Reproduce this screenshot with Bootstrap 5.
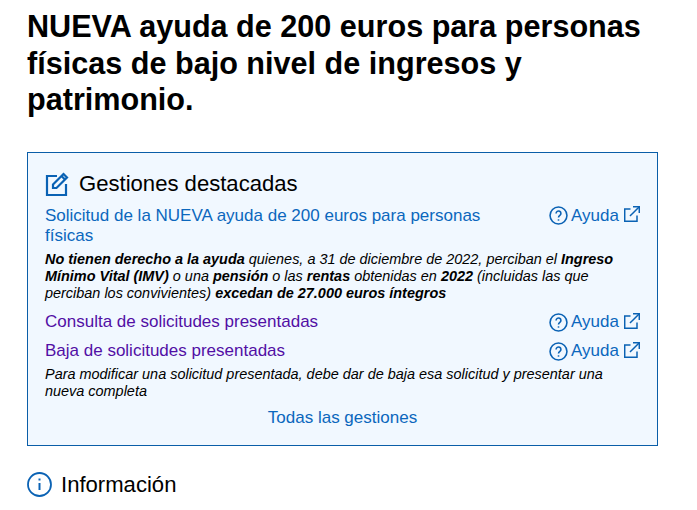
<!DOCTYPE html>
<html lang="es">
<head>
<meta charset="utf-8">
<title>Ayuda 200 euros</title>
<link href="https://cdn.jsdelivr.net/npm/bootstrap@5.3.0/dist/css/bootstrap.min.css" rel="stylesheet">
<style>
body { font-family: "Liberation Sans", Arial, sans-serif; color: #000; overflow: hidden; }
a { text-decoration: none; color: #0b67bd; }
.page-wrap { padding: 8px 39px 0 27px; }
.main-title { font-family: inherit; font-size: 30.6px; font-weight: 700; line-height: 36.7px; margin: 0 0 34px; color: #000; }
.feature-box { border: 1px solid #0a5ea8; background: #f1f8ff; padding: 17px; }
.box-head { font-size: 22.1px; line-height: 27px; margin: 0 0 8.5px; font-weight: 400; }
.head-ico { width: 24px; height: 24px; margin-right: 10px; flex: none; color: #0a62b4; }
.tool-row { font-size: 17px; line-height: 20.4px; }
.tool-gap-a { margin-bottom: 5px; }
.tool-gap-b { margin-bottom: 8.6px; }
.tool-gap-c { margin-bottom: 4px; }
.visited-link { color: #520fa5; }
.help-link { width: 90px; flex: none; white-space: nowrap; }
.help-ico { width: 19px; height: 19px; color: #0a62b4; flex: none; margin-left: -1px; margin-right: 3px; }
.ext-ico { width: 16px; height: 16px; color: #0a62b4; flex: none; margin-left: 5px; margin-top: -3px; }
.note { font-size: 14.45px; line-height: 17px; font-style: italic; margin: 0 0 10px; }
.note-end { margin-bottom: 8px; }
.all-link { font-size: 17px; line-height: 20px; }
.info-head { font-size: 22.1px; line-height: 27px; font-weight: 400; margin: 25px 0 0; }
.info-ico { width: 25px; height: 25px; margin-right: 9px; color: #0a62b4; flex: none; }
.tool-main { max-width: 460px; }
</style>
</head>
<body>
<div class="page-wrap">
  <h1 class="main-title">NUEVA ayuda de 200 euros para personas físicas de bajo nivel de ingresos y patrimonio.</h1>
  <section class="feature-box">
    <h2 class="box-head d-flex align-items-center">
      <svg class="head-ico" viewBox="0 0 24 24" fill="none" stroke="currentColor" stroke-width="2.200"><path d="M12 4H2v19h19V12"/><path d="M8 12.500 18.500 2l3.500 3.500L11.500 16H8z"/><path d="m16.500 4 3.500 3.500"/></svg>
      Gestiones destacadas
    </h2>
    <div class="tool-row tool-gap-a d-flex justify-content-between">
      <a href="#" class="tool-main">Solicitud de la NUEVA ayuda de 200 euros para personas físicas</a>
      <a href="#" class="help-link d-flex align-items-start"><span class="d-flex align-items-center"><svg class="help-ico" viewBox="0 0 18 18" fill="none" stroke="currentColor" stroke-width="1.500"><circle cx="9" cy="9" r="8"/><path d="M6.700 7a2.300 2.300 0 1 1 3.600 1.900C9.400 9.500 9 10 9 11"/><path d="M9 12.600v1.300"/></svg>Ayuda<svg class="ext-ico" viewBox="0 0 16 16" fill="none" stroke="currentColor" stroke-width="1.500"><path d="M6.500 3H.7v12.300H13V9.500"/><path d="M6 10 15.300.7"/><path d="M9 .7h6.300V7"/></svg></span></a>
    </div>
    <p class="note"><strong>No tienen derecho a la ayuda</strong> quienes, a 31 de diciembre de 2022, perciban el <strong>Ingreso Mínimo Vital (IMV)</strong> o una <strong>pensión</strong> o las <strong>rentas</strong> obtenidas en <strong>2022</strong> (incluidas las que perciban los convivientes) <strong>excedan de 27.000 euros íntegros</strong></p>
    <div class="tool-row tool-gap-b d-flex justify-content-between">
      <a href="#" class="visited-link">Consulta de solicitudes presentadas</a>
      <a href="#" class="help-link d-flex align-items-center"><svg class="help-ico" viewBox="0 0 18 18" fill="none" stroke="currentColor" stroke-width="1.500"><circle cx="9" cy="9" r="8"/><path d="M6.700 7a2.300 2.300 0 1 1 3.600 1.900C9.400 9.500 9 10 9 11"/><path d="M9 12.600v1.300"/></svg>Ayuda<svg class="ext-ico" viewBox="0 0 16 16" fill="none" stroke="currentColor" stroke-width="1.500"><path d="M6.500 3H.7v12.300H13V9.500"/><path d="M6 10 15.300.7"/><path d="M9 .7h6.300V7"/></svg></a>
    </div>
    <div class="tool-row tool-gap-c d-flex justify-content-between">
      <a href="#" class="visited-link">Baja de solicitudes presentadas</a>
      <a href="#" class="help-link d-flex align-items-center"><svg class="help-ico" viewBox="0 0 18 18" fill="none" stroke="currentColor" stroke-width="1.500"><circle cx="9" cy="9" r="8"/><path d="M6.700 7a2.300 2.300 0 1 1 3.600 1.900C9.400 9.500 9 10 9 11"/><path d="M9 12.600v1.300"/></svg>Ayuda<svg class="ext-ico" viewBox="0 0 16 16" fill="none" stroke="currentColor" stroke-width="1.500"><path d="M6.500 3H.7v12.300H13V9.500"/><path d="M6 10 15.300.7"/><path d="M9 .7h6.300V7"/></svg></a>
    </div>
    <p class="note note-end">Para modificar una solicitud presentada, debe dar de baja esa solicitud y presentar una nueva completa</p>
    <div class="text-center all-link"><a href="#">Todas las gestiones</a></div>
  </section>
  <h2 class="info-head d-flex align-items-center">
    <svg class="info-ico" viewBox="0 0 25 25" fill="none" stroke="currentColor" stroke-width="1.800"><circle cx="12.500" cy="12.500" r="11.500"/><path d="M12.500 11v7" stroke-width="2"/><path d="M12.500 6.500v2" stroke-width="2"/></svg>
    Información
  </h2>
</div>
<script src="https://cdn.jsdelivr.net/npm/bootstrap@5.3.0/dist/js/bootstrap.bundle.min.js"></script>
</body>
</html>
